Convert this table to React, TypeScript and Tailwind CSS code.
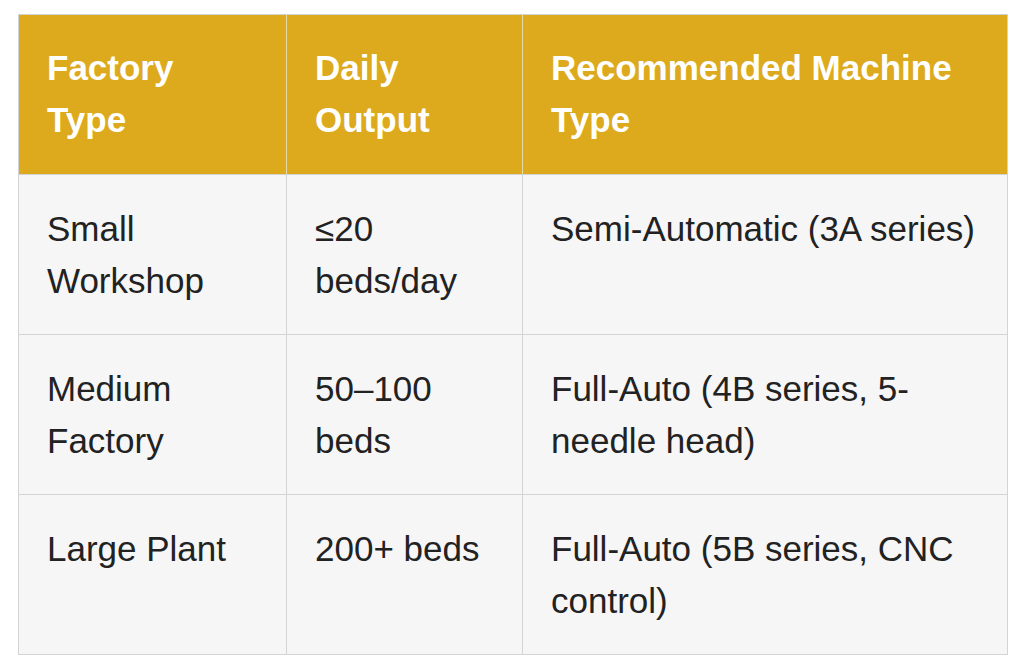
import React from "react";

const rows = [
  ["Small Workshop", "≤20 beds/day", "Semi-Automatic (3A series)"],
  ["Medium Factory", "50–100 beds", "Full-Auto (4B series, 5-needle head)"],
  ["Large Plant", "200+ beds", "Full-Auto (5B series, CNC control)"],
];

export default function App() {
  return (
    <div className="w-[1024px] h-[671px] bg-white pt-[14px] pl-[18px] font-['Liberation_Sans',Arial,sans-serif]">
      <table className="table-fixed border-collapse w-[989px] text-[35px] leading-[52px]">
        <colgroup>
          <col className="w-[268px]" />
          <col className="w-[236px]" />
          <col className="w-[485px]" />
        </colgroup>
        <thead>
          <tr className="bg-[#ddaa1d] text-white font-bold">
            <th className="border border-[#d2d2d2] border-r-[#e8d9a8] p-[28px] pt-[27px] text-left align-top font-bold">Factory Type</th>
            <th className="border border-[#d2d2d2] border-r-[#e8d9a8] p-[28px] pt-[27px] text-left align-top font-bold">Daily Output</th>
            <th className="border border-[#d2d2d2] p-[28px] pt-[27px] text-left align-top font-bold">Recommended Machine Type</th>
          </tr>
        </thead>
        <tbody>
          {rows.map((r, i) => (
            <tr key={i} className="bg-[#f6f6f6] text-[#222222]">
              {r.map((c, j) => (
                <td key={j} className="border border-[#d4d4d4] px-[28px] pt-[28px] pb-[26px] align-top h-[160px]">
                  {c}
                </td>
              ))}
            </tr>
          ))}
        </tbody>
      </table>
    </div>
  );
}
